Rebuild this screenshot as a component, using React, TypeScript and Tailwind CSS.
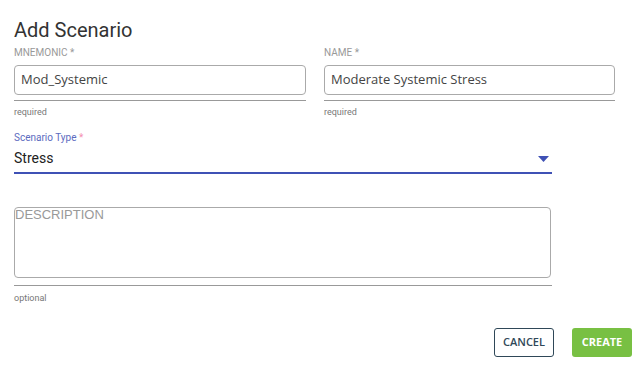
export default function App() {
  return (
    <div className="w-[643px] h-[374px] bg-white pl-[14px] pt-[17px] font-['Roboto',sans-serif] text-[#333]">
      <h1 className="text-[20px] leading-[26px] text-[#333]">Add Scenario</h1>

      <div className="mt-[4px] flex gap-[18px]">
        <Field label="MNEMONIC *" value="Mod_Systemic" width="w-[292px]" />
        <Field label="NAME *" value="Moderate Systemic Stress" width="w-[291px]" />
      </div>

      <div className="mt-[14px] w-[538px]">
        <div className="text-[10px] leading-[12px] text-[#5c6bc0]">
          Scenario Type <span className="text-[#f48fb1]">*</span>
        </div>
        <div className="mt-[6px] flex items-center justify-between pr-[2px]">
          <span className="text-[14px] leading-[17px] text-[#222]">Stress</span>
          <svg width="11" height="6" viewBox="0 0 11 6" className="mr-[1px]">
            <path d="M0 0h11L5.5 6z" fill="#3f51b5" />
          </svg>
        </div>
        <div className="mt-[5px] h-[2px] bg-[#3f51b5]" />
      </div>

      <div className="mt-[33px] w-[538px]">
        <div className="h-[71px] w-[537px] rounded-[4px] border border-[#aaa] font-['Liberation_Sans',sans-serif] text-[13px] leading-[14px] text-[#999]">
          DESCRIPTION
        </div>
        <div className="mt-[7px] h-px bg-[#999]" />
        <div className="mt-[7px] text-[9px] leading-[11px] text-[#777]">optional</div>
      </div>

      <div className="mt-[24px] flex justify-end gap-[18px] pr-[11px] font-['Open_Sans',sans-serif]">
        <button className="h-[29px] w-[60px] rounded-[3px] border border-[#2f4858] text-[11px] font-semibold text-[#2f4858]">
          CANCEL
        </button>
        <button className="h-[29px] w-[60px] rounded-[3px] bg-[#78c043] text-[11px] font-bold text-white">
          CREATE
        </button>
      </div>
    </div>
  );
}

function Field({ label, value, width }: { label: string; value: string; width: string }) {
  return (
    <div className={width}>
      <div className="text-[10px] leading-[12px] text-[#999]">{label}</div>
      <div className="mt-[6px] flex h-[30px] items-center rounded-[4px] border border-[#aaa] px-[6px] font-['Open_Sans',sans-serif] text-[13px] text-[#444]">
        {value}
      </div>
      <div className="mt-[5px] h-px bg-[#999]" />
      <div className="mt-[6px] text-[9px] leading-[11px] text-[#777]">required</div>
    </div>
  );
}
